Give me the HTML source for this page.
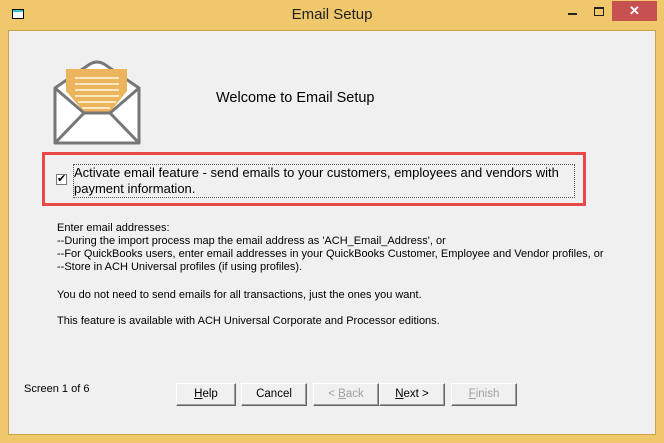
<!DOCTYPE html>
<html><head><style>
body{margin:0;width:664px;height:443px;background:#f0c86c;font-family:"Liberation Sans",sans-serif;position:relative;overflow:hidden}
.a{position:absolute}
.client{left:8px;top:30px;width:648px;height:405px;background:#f0f0f0;border:1px solid #c9a54a;box-sizing:border-box}
.t{font-size:11px;color:#000;white-space:nowrap}
.btn{position:absolute;top:383px;height:23px;box-sizing:border-box;background:#f0f0f0;border:1px solid;border-color:#fff #646464 #646464 #fff;box-shadow:inset -1px -1px 0 #a0a0a0;font-size:11.5px;text-align:center;line-height:21px}
.dis{color:#a0a0a0}
</style></head><body>
<div class="a" style="left:12px;top:9px;width:10px;height:8px;border:1.5px solid #000;background:#fff;box-shadow:inset 0 2px 0 #3cc"></div>
<div class="a" style="left:0;top:6px;width:664px;text-align:center;font-size:15px;color:#222">Email Setup</div>
<div class="a" style="left:568px;top:13px;width:9px;height:2px;background:#222"></div>
<div class="a" style="left:594px;top:7px;width:8px;height:6px;border:1.5px solid #222;border-top-width:2px"></div>
<div class="a" style="left:612px;top:1px;width:45px;height:20px;background:#c75050;color:#fff;text-align:center;font-size:13px;line-height:20px;font-weight:bold">✕</div>
<div class="a client"></div>
<svg class="a" style="left:52px;top:58px" width="90" height="90" viewBox="0 0 90 90">
<path d="M3 30 L38 6 Q45 2 52 6 L87 30 L87 85 L3 85 Z" fill="#fff" stroke="#777" stroke-width="3" stroke-linejoin="round"/>
<path d="M14 11 H75 V33 L58 54 H32 L14 33 Z" fill="#ecb45c"/>
<g stroke="#fff8e8" stroke-width="1.5"><path d="M23 20H67M23 26H67M23 32H67M23 38H67M26 44H64M30 50H58"/></g>
<path d="M3 30 L32 55 H58 L87 30 M3 85 L32 55 M58 55 L87 85" fill="none" stroke="#777" stroke-width="3" stroke-linejoin="round"/>
</svg>
<div class="a" style="left:216px;top:90px;font-size:14.5px">Welcome to Email Setup</div>
<div class="a" style="left:42px;top:152px;width:544px;height:54px;border:3px solid #e84848;box-sizing:border-box"></div>
<div class="a" style="left:56px;top:174px;width:11px;height:11px;background:#fff;border:1px solid #777;box-sizing:border-box;font-size:11px;line-height:9px;text-align:center">✔</div>
<div class="a" style="left:73px;top:164px;width:500px;height:32px;border:1px dotted #555;font-size:13px;line-height:16px">Activate email feature - send emails to your customers, employees and vendors with payment information.</div>
<div class="a t" style="left:57px;top:222px;line-height:13px">Enter email addresses:<br>--During the import process map the email address as 'ACH_Email_Address', or<br>--For QuickBooks users, enter email addresses in your QuickBooks Customer, Employee and Vendor profiles, or<br>--Store in ACH Universal profiles (if using profiles).</div>
<div class="a t" style="left:57px;top:289px">You do not need to send emails for all transactions, just the ones you want.</div>
<div class="a t" style="left:57px;top:315px">This feature is available with ACH Universal Corporate and Processor editions.</div>
<div class="a t" style="left:24px;top:383px">Screen 1 of 6</div>
<div class="btn" style="left:176px;width:60px"><u>H</u>elp</div>
<div class="btn" style="left:241px;width:66px">Cancel</div>
<div class="btn dis" style="left:313px;width:66px">&lt; <u>B</u>ack</div>
<div class="btn" style="left:379px;width:66px"><u>N</u>ext &gt;</div>
<div class="btn dis" style="left:451px;width:66px"><u>F</u>inish</div>
</body></html>
